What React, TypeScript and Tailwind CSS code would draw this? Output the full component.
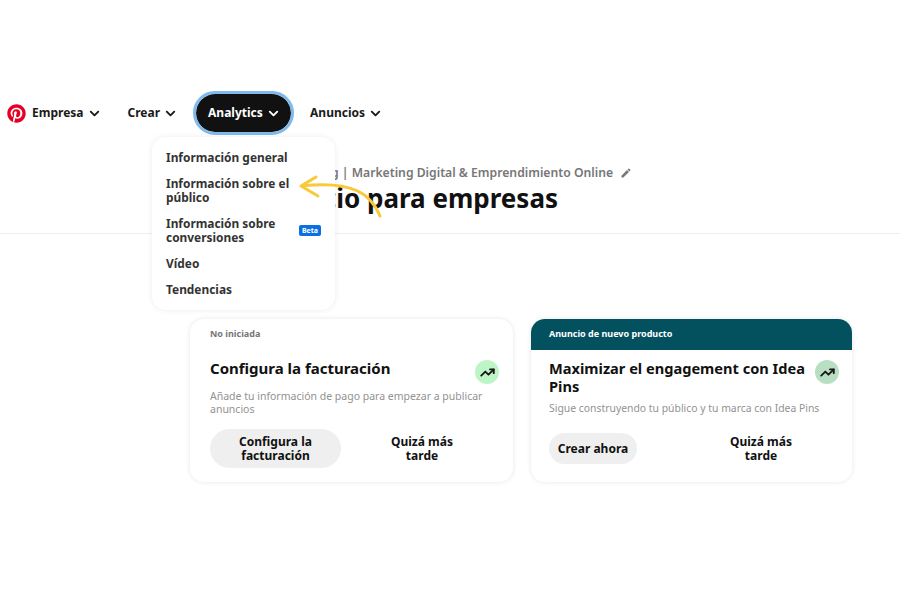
import { ChevronDown, TrendingUp } from "lucide-react";
import { FaPinterest } from "react-icons/fa";
import { MdEdit } from "react-icons/md";

const font = "font-['Noto_Sans','Liberation_Sans',sans-serif]";

function NavItem({ label, active }: { label: string; active?: boolean }) {
  return (
    <div
      className={
        active
          ? "flex h-[38px] w-[95px] items-center gap-[3px] rounded-full bg-[#111111] pl-[12px] text-white outline-[3px] outline-[#7fb9ee]"
          : "flex items-center gap-[3px] text-[#1a1a1a]"
      }
    >
      <span className="text-[12px] font-bold">{label}</span>
      <ChevronDown size={15} strokeWidth={3} />
    </div>
  );
}

function TrendBadge({ color }: { color: string }) {
  return (
    <div className={`mt-[1px] flex h-6 w-6 shrink-0 items-center justify-center rounded-full ${color}`}>
      <TrendingUp size={15} strokeWidth={3} className="text-[#1a1a1a]" />
    </div>
  );
}

function Dropdown() {
  return (
    <div className="absolute left-[152px] top-[45px] z-10 flex w-[183px] flex-col gap-[12px] rounded-[14px] bg-white pb-[14px] pl-[14px] pr-[14px] pt-[13px] text-[11.9px] font-bold leading-[14px] text-[#333333] shadow-[0_0_6px_rgba(0,0,0,0.08)]">
      <p>Información general</p>
      <p>Información sobre el público</p>
      <div className="flex items-center justify-between">
        <p className="w-[125px]">Información sobre conversiones</p>
        <span className="rounded-[2px] bg-[#0a6fe0] px-[3px] text-[7px] leading-[11px] text-white">Beta</span>
      </div>
      <p>Vídeo</p>
      <p>Tendencias</p>
    </div>
  );
}

export default function App() {
  return (
    <div className={`relative h-[600px] w-[900px] overflow-hidden bg-white ${font}`}>
      <div className="relative mt-[92px] flex h-[42px] items-center pl-[7px]">
        <FaPinterest size={19} className="mr-[6px] text-[#e60023]" />
        <NavItem label="Empresa" />
        <div className="ml-[26px]">
          <NavItem label="Crear" />
        </div>
        <div className="ml-[18px]">
          <NavItem label="Analytics" active />
        </div>
        <div className="ml-[19px]">
          <NavItem label="Anuncios" />
        </div>
        <Dropdown />
      </div>

      <div className="flex h-[100px] flex-col border-b border-[#eeeeee] pl-[288px] pt-[31px]">
        <div className="ml-[24px] flex items-center gap-[7px] text-[12.2px] font-semibold leading-[16px] text-[#767676]">
          <span>Blog | Marketing Digital &amp; Emprendimiento Online</span>
          <MdEdit size={12} />
        </div>
        <h1 className="text-[26px] font-bold leading-[34px] text-[#111111]">Inicio para empresas</h1>
      </div>

      {/* flecha amarilla sobre el menu */}
      <svg className="absolute left-[295px] top-[172px] z-20" width="90" height="50" viewBox="0 0 90 50" fill="none">
        <path
          d="M85 44 C76 22 58 8 6 14 M6 14 L21 5 M6 14 L23 24"
          stroke="#f8c93a"
          strokeWidth="3"
          strokeLinecap="round"
          strokeLinejoin="round"
        />
      </svg>

      <div className="ml-[190px] mt-[85px] flex gap-[18px]">
        <div className="h-[163px] w-[323px] rounded-[14px] bg-white pl-[20px] pr-[14px] shadow-[0_0_5px_rgba(0,0,0,0.1)]">
          <p className="pt-[8px] text-[9px] font-bold leading-[13px] text-[#767676]">No iniciada</p>
          <div className="mt-[19px] flex items-start justify-between">
            <h2 className="text-[15px] font-bold leading-[18px] text-[#111111]">Configura la facturación</h2>
            <TrendBadge color="bg-[#bdf5c6]" />
          </div>
          <p className="mt-[6px] w-[285px] text-[10.5px] leading-[13px] text-[#929292]">
            Añade tu información de pago para empezar a publicar anuncios
          </p>
          <div className="mt-[13px] flex items-center">
            <div className="flex h-[39px] w-[131px] items-center justify-center rounded-full bg-[#efefef] px-[20px] text-center text-[12px] font-bold leading-[14px] text-[#111111]">
              Configura la facturación
            </div>
            <div className="ml-[41px] w-[80px] text-center text-[12px] font-bold leading-[14px] text-[#111111]">
              Quizá más tarde
            </div>
          </div>
        </div>

        <div className="h-[163px] w-[321px] overflow-hidden rounded-[14px] bg-white shadow-[0_0_5px_rgba(0,0,0,0.1)]">
          <div className="flex h-[31px] items-center bg-[#03505f] px-[18px] pb-[2px] text-[9px] font-bold text-white">
            Anuncio de nuevo producto
          </div>
          <div className="pl-[18px] pr-[13px]">
            <div className="mt-[9px] flex items-start justify-between">
              <h2 className="w-[263px] text-[14.6px] font-bold leading-[18px] text-[#111111]">
                Maximizar el engagement con Idea Pins
              </h2>
              <TrendBadge color="bg-[#b9dfc2]" />
            </div>
            <p className="mt-[6px] text-[10.4px] leading-[14px] text-[#929292]">
              Sigue construyendo tu público y tu marca con Idea Pins
            </p>
            <div className="mt-[18px] flex items-center">
              <div className="flex h-[31px] w-[88px] items-center justify-center rounded-full bg-[#efefef] text-[12px] font-bold text-[#111111]">
                Crear ahora
              </div>
              <div className="ml-[84px] w-[80px] text-center text-[12px] font-bold leading-[14px] text-[#111111]">
                Quizá más tarde
              </div>
            </div>
          </div>
        </div>
      </div>
    </div>
  );
}
